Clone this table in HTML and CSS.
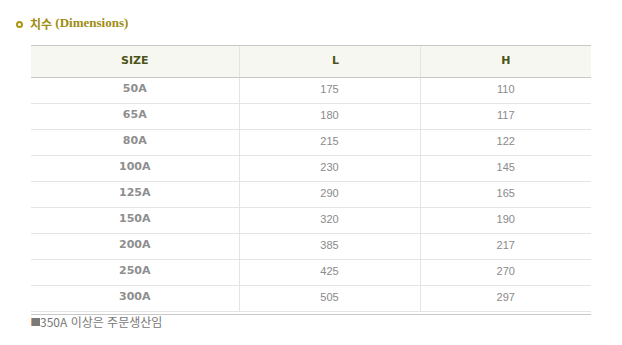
FILE: index.html
```html
<!DOCTYPE html>
<html lang="ko">
<head>
<meta charset="utf-8">
<link rel="stylesheet" href="styles.css">
</head>
<body>
<div class="page">
  <h2 class="title"><span class="bullet"></span><span class="ko">치수</span> (Dimensions)</h2>
  <table class="dims">
    <thead>
      <tr><th class="c1">SIZE</th><th class="c2">L</th><th class="c3">H</th></tr>
    </thead>
    <tbody>
      <tr><td class="size">50A</td><td>175</td><td>110</td></tr>
      <tr><td class="size">65A</td><td>180</td><td>117</td></tr>
      <tr><td class="size">80A</td><td>215</td><td>122</td></tr>
      <tr><td class="size">100A</td><td>230</td><td>145</td></tr>
      <tr><td class="size">125A</td><td>290</td><td>165</td></tr>
      <tr><td class="size">150A</td><td>320</td><td>190</td></tr>
      <tr><td class="size">200A</td><td>385</td><td>217</td></tr>
      <tr><td class="size">250A</td><td>425</td><td>270</td></tr>
      <tr><td class="size">300A</td><td>505</td><td>297</td></tr>
    </tbody>
  </table>
  <p class="note"><span class="sq"></span>350A 이상은 주문생산임</p>
</div>
</body>
</html>
```

FILE: styles.css
```css
html, body { margin: 0; padding: 0; background: #fff; }
.page { padding: 14px 0 0 15px; }
.title {
  margin: 0;
  display: flex;
  align-items: center;
  height: 18px;
  font: bold 13px "Liberation Serif", "Noto Sans CJK KR", serif;
  color: #a08c10;
  white-space: pre;
}
.title .ko { font-family: "Noto Sans CJK KR", sans-serif; font-weight: bold; font-size: 12px; }
.bullet {
  width: 3px; height: 3px;
  border: 2px solid #a89614;
  border-radius: 50%;
  margin: 2px 7px 0 1px;
}
.dims {
  margin: 13px 0 0 16px;
  width: 560px;
  border-collapse: collapse;
  table-layout: fixed;
}
.dims th, .dims td { box-sizing: border-box; }
.dims th {
  height: 32px;
  padding: 0 0 3px;
  background: #f7f7f2;
  border-top: 1px solid #c8c8c8;
  border-bottom: 1px solid #c8c8c8;
  font: bold 11px "DejaVu Sans", sans-serif;
  color: #4b5317;
  text-align: center;
}
.dims .c1 { width: 208px; }
.dims .c2 { width: 181px; padding-left: 12px; }
.dims .c3 { width: 171px; }
.dims th + th, .dims td + td { border-left: 1px solid #e4e4e4; }
.dims td {
  height: 26px;
  padding: 0 0 4px;
  border-bottom: 1px solid #e4e4e4;
  font: 11px "Liberation Sans", sans-serif;
  color: #8a8a8a;
  text-align: center;
}
.dims td.size { font: bold 11px "DejaVu Sans", sans-serif; color: #8e8e8e; }
.note {
  margin: 2px 0 0 16px;
  width: 560px;
  border-top: 1px solid #c8c8c8;
  font: 12px "Noto Sans CJK KR", sans-serif;
  color: #777;
  line-height: 13px;
  display: flex;
  align-items: center;
}
.sq {
  width: 8px; height: 8px;
  background: #7a7a7a;
  border-left: 1px solid #e39a6a;
}
```
